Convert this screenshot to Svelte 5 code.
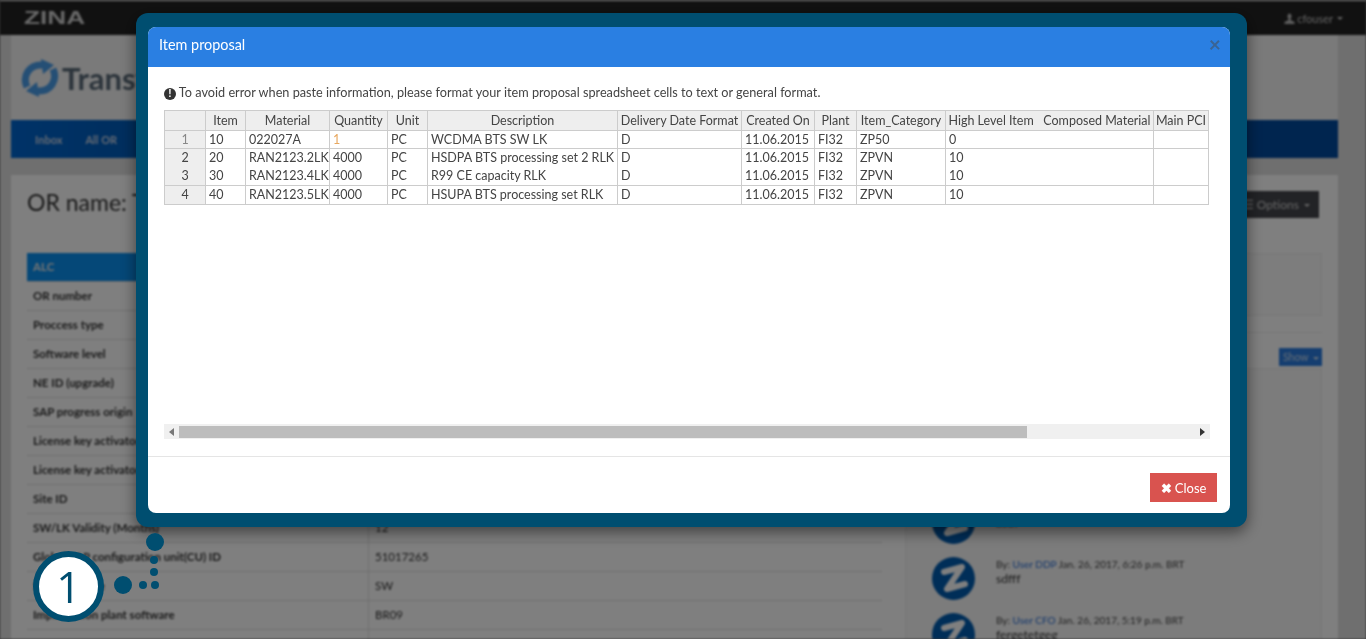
<script>
  const rows = [
    ['ALC', ''],
    ['OR number', ''],
    ['Proccess type', ''],
    ['Software level', ''],
    ['NE ID (upgrade)', ''],
    ['SAP progress origin', ''],
    ['License key activator', ''],
    ['License key activator', ''],
    ['Site ID', ''],
    ['SW/LK Validity (Months)', '12'],
    ['Global SAP configuration unit(CU) ID', '51017265'],
    ['Software type', 'SW'],
    ['Implantation plant software', 'BR09'],
    ['', '']
  ];

  const comments = [
    { user: 'User ADM', date: 'Jan. 26, 2017, 6:30 p.m. BRT', text: 'asdf' },
    { user: 'User DDP', date: 'Jan. 26, 2017, 6:26 p.m. BRT', text: 'sdfff' },
    { user: 'User CFO', date: 'Jan. 26, 2017, 5:19 p.m. BRT', text: 'fergetetgeg' }
  ];

  const headers = ['', 'Item', 'Material', 'Quantity', 'Unit', 'Description', 'Delivery Date Format', 'Created On', 'Plant', 'Item_Category', 'High Level Item\u00a0\u00a0\u00a0Composed Material', 'Main PCI'];
  const widths = [41, 40, 84, 58, 40, 190, 124, 73, 42, 89, 208, 55];

  const items = [
    { n: 1, item: '10', material: '022027A', qty: '1', desc: 'WCDMA BTS SW LK', cat: 'ZP50', high: '0' },
    { n: 2, item: '20', material: 'RAN2123.2LK', qty: '4000', desc: 'HSDPA BTS processing set 2 RLK', cat: 'ZPVN', high: '10' },
    { n: 3, item: '30', material: 'RAN2123.4LK', qty: '4000', desc: 'R99 CE capacity RLK', cat: 'ZPVN', high: '10' },
    { n: 4, item: '40', material: 'RAN2123.5LK', qty: '4000', desc: 'HSUPA BTS processing set RLK', cat: 'ZPVN', high: '10' }
  ];
</script>

<div class="page">
  <header class="topbar">
    <span class="brand">ZINA</span>
    <span class="user">
      <svg width="11" height="11" viewBox="0 0 10 11"><path d="M3 3a2 2.6 0 1 1 4 0q0 2-1 3v1l4 2v2H0V9l4-2V6Q3 5 3 3z" fill="#bbb"/></svg>
      cfouser <i class="caret"></i>
    </span>
  </header>

  <div class="logo">
    <svg width="38" height="40" viewBox="0 0 38 40">
      <path d="M6 29C1 18 8 6 22 7" fill="none" stroke="#4a9eea" stroke-width="7"/>
      <path d="M32 11c5 11-2 23-16 22" fill="none" stroke="#4a9eea" stroke-width="7"/>
      <path d="M20 1l13 6-11 9zM18 39L5 33l11-9z" fill="#4a9eea"/>
    </svg>
    <span>Transformation</span>
  </div>

  <nav class="mainnav">
    <span>Inbox</span>
    <span>All OR</span>
  </nav>

  <section class="card">
    <div class="card-head">
      <h1>OR name: Test</h1>
      <span class="options"><b>☰</b> Options <i class="caret"></i></span>
    </div>
    <div class="columns">
      <div class="details">
        {#each rows as row, i}
          <div class="drow" class:selected={i === 0}>
            <span class="dlabel">{row[0]}</span>
            <span class="dvalue">{row[1]}</span>
          </div>
        {/each}
      </div>
      <aside class="side">
        <div class="side-box"></div>
        <div class="side-head"><span class="show">Show <i class="caret"></i></span></div>
        <div class="comments">
          {#each comments as c}
            <div class="comment">
              <svg class="avatar" width="43" height="43" viewBox="0 0 43 43">
                <circle cx="21.5" cy="21.5" r="21.5" fill="#005cb0"/>
                <path d="M12 15l18-5-15 22 18-5" fill="none" stroke="#fff" stroke-width="6" stroke-linejoin="round" stroke-linecap="round"/>
              </svg>
              <div>
                <div class="meta">By: <span class="who">{c.user}</span> {c.date}</div>
                <div class="ctext">{c.text}</div>
              </div>
            </div>
          {/each}
        </div>
      </aside>
    </div>
  </section>
</div>

<div class="overlay"></div>

<div class="frame">
  <div class="modal">
    <div class="modal-head">
      <span>Item proposal</span>
      <span class="x">×</span>
    </div>
    <div class="modal-body">
      <p class="hint">
        <span class="info">!</span>
        To avoid error when paste information, please format your item proposal spreadsheet cells to text or general format.
      </p>
      <div class="sheet">
        <div class="grid-wrap">
          <table>
            <colgroup>
              {#each widths as w}<col style={`width:${w}px`} />{/each}
            </colgroup>
            <thead>
              <tr>
                {#each headers as h}<th>{h}</th>{/each}
              </tr>
            </thead>
            <tbody>
              {#each items as it}
                <tr class:tight={it.n === 3} class:pre={it.n === 2} class:last={it.n === 4}>
                  <td class="num" class:faint={it.n === 1}>{it.n}</td>
                  <td>{it.item}</td>
                  <td>{it.material}</td>
                  <td class:orange={it.n === 1}>{it.qty}</td>
                  <td>PC</td>
                  <td>{it.desc}</td>
                  <td>D</td>
                  <td>11.06.2015</td>
                  <td>FI32</td>
                  <td>{it.cat}</td>
                  <td>{it.high}</td>
                  <td></td>
                </tr>
              {/each}
            </tbody>
          </table>
        </div>
        <div class="scrollbar">
          <span class="arrow left"></span>
          <div class="track"><div class="thumb"></div></div>
          <span class="arrow right"></span>
        </div>
      </div>
    </div>
    <div class="modal-foot">
      <button type="button" class="close"><b>✖</b> Close</button>
    </div>
  </div>
</div>

<div class="marker">
  <span class="dot big d1"></span>
  <span class="dot d2"></span>
  <span class="dot d3"></span>
  <span class="dot d4"></span>
  <span class="dot d5"></span>
  <span class="dot big d6"></span>
  <span class="badge">1</span>
</div>

<style>
  :global(body) {
    margin: 0;
    height: 639px;
    overflow: hidden;
    background: #6e6e6e;
    font-family: Lato, "Open Sans", sans-serif;
  }

  .page {
    height: 639px;
    overflow: hidden;
    background: #dedede;
    filter: blur(0.9px);
  }

  .topbar {
    height: 35px;
    background: #232323;
    border-top: 1px solid #fff;
    box-sizing: border-box;
    display: flex;
    align-items: center;
    justify-content: space-between;
    padding: 0 23px 0 24px;
  }

  .brand {
    font-family: "Liberation Sans", sans-serif;
    font-weight: 700;
    font-size: 19px;
    color: #d0d0d0;
    transform: scaleX(1.38);
    transform-origin: left;
  }

  .user {
    font-size: 11px;
    color: #c8c8c8;
    display: flex;
    align-items: center;
    gap: 2px;
  }

  .caret {
    display: inline-block;
    border: 3px solid transparent;
    border-top-color: currentColor;
    border-bottom: 0;
    margin-left: 2px;
    vertical-align: middle;
  }

  .logo {
    height: 85px;
    display: flex;
    align-items: center;
    gap: 3px;
    font-size: 31px;
    font-weight: 700;
    color: #5a6a78;
    background: #f4f4f4;
    box-sizing: border-box;
    margin: 0 28px 0 11px;
    padding-left: 10px;
  }

  .mainnav {
    height: 38px;
    margin: 0 28px 0 11px;
    background: linear-gradient(90deg, #0066d0, #005cba 10%, #004a9f 90%);
    display: flex;
    align-items: center;
    gap: 23px;
    padding-left: 24px;
    color: #c8d4e6;
    font-size: 11px;
    font-weight: 700;
  }

  .card {
    margin: 17px 28px 0 11px;
    padding: 0 16px;
    background: #fff;
    height: 470px;
  }

  .card-head {
    height: 78px;
    display: flex;
    justify-content: space-between;
    align-items: flex-start;
  }

  h1 {
    margin: 13px 0 0;
    font-size: 23px;
    font-weight: 400;
    color: #333;
  }

  .options {
    background: #44464c;
    color: #ccc;
    font-size: 12px;
    line-height: 15px;
    padding: 6px 9px 6px 12px;
    margin: 16px 3px 0 0;
  }

  .options b {
    font-weight: 400;
  }

  .columns {
    display: flex;
    gap: 23px;
  }

  .details {
    width: 855px;
    flex: none;
  }

  .drow {
    height: 29px;
    display: flex;
    align-items: center;
    border-bottom: 1px solid #ddd;
    box-sizing: border-box;
    font-size: 11.5px;
    color: #333;
  }

  .drow.selected {
    background: #fff linear-gradient(90deg, #0a90f0, #0a90f0) no-repeat left / 341px 100%;
  }

  .drow.selected .dlabel {
    color: #e8e8e8;
  }

  .dlabel {
    width: 341px;
    padding: 0 0 2px 6px;
    font-weight: 700;
    flex: none;
    box-sizing: border-box;
  }

  .dvalue {
    padding: 0 0 2px 6px;
    border-left: 1px solid #ddd;
    height: 100%;
    box-sizing: border-box;
    display: flex;
    align-items: center;
  }

  .side {
    flex: 1;
    display: flex;
    flex-direction: column;
  }

  .side-box {
    height: 61px;
    border: 1px solid #eee;
    background: #fafafa;
  }

  .side-head {
    margin-top: 16px;
    border-top: 1px solid #eee;
    height: 33px;
    display: flex;
    justify-content: flex-end;
    align-items: flex-end;
  }

  .show {
    background: #2a7ce0;
    color: #cde;
    font-size: 10.5px;
    line-height: 14px;
    padding: 2px 3px 2px 4px;
  }

  .comments {
    border: 1px solid #eee;
    background: #f8f8f8;
    padding: 132px 0 0 26px;
    flex: 1;
    margin-top: 2px;
  }

  .comment {
    display: flex;
    gap: 21px;
    height: 56px;
  }

  .avatar {
    flex: none;
  }

  .meta {
    font-size: 10px;
    color: #444;
    padding-top: 1px;
  }

  .who {
    color: #2a6fd8;
  }

  .ctext {
    font-size: 12.2px;
    line-height: 15px;
    color: #333;
    margin-top: 1px;
  }

  .overlay {
    position: fixed;
    inset: 0;
    background: rgba(0, 0, 0, 0.5);
  }

  .frame {
    position: fixed;
    left: 136px;
    top: 13px;
    width: 1111px;
    height: 514px;
    box-sizing: border-box;
    padding: 14px 17px 14px 12px;
    background: #004e70;
    border-radius: 12px;
    box-shadow: 0 5px 15px rgba(0, 0, 0, 0.5);
  }

  .modal {
    height: 100%;
    background: #fff;
    border-radius: 8px;
    overflow: hidden;
    display: flex;
    flex-direction: column;
  }

  .modal-head {
    height: 40px;
    flex: none;
    box-sizing: border-box;
    background: #2a7fe2;
    color: #fff;
    font-size: 14.4px;
    display: flex;
    align-items: center;
    justify-content: space-between;
    padding: 0 9px 5px 11px;
  }

  .x {
    color: #3a6494;
    font-size: 21px;
    line-height: 20px;
    font-weight: 700;
    margin-top: -2px;
  }

  .modal-body {
    flex: 1;
    padding: 0 16px;
    min-height: 0;
    border-bottom: 1px solid #e5e5e5;
  }

  .hint {
    margin: 16px 0 9px;
    font-size: 12.7px;
    line-height: 18px;
    color: #444;
    white-space: nowrap;
  }

  .info {
    display: inline-block;
    width: 12px;
    height: 12px;
    border-radius: 50%;
    background: #333;
    color: #fff;
    font: 700 10px/12px "Liberation Sans", sans-serif;
    text-align: center;
  }

  .sheet {
    width: 1046px;
    height: 329px;
    display: flex;
    flex-direction: column;
    justify-content: space-between;
  }

  .grid-wrap {
    overflow: hidden;
    padding: 0 0 1px 0;
  }

  table {
    border-collapse: collapse;
    table-layout: fixed;
    font-size: 12.5px;
    color: #444;
    white-space: nowrap;
    width: 1044px;
  }

  th {
    height: 20px;
    padding: 0 0 1px;
    box-sizing: border-box;
    font-weight: 400;
    background: #eee;
    border: 1px solid #ccc;
    overflow: hidden;
  }

  td {
    height: 18px;
    box-sizing: border-box;
    padding: 0 0 1px 3px;
    line-height: 15px;
    border: 1px solid #ccc;
    overflow: hidden;
  }

  tr.pre td {
    border-bottom: 0;
  }

  tr.tight td {
    border-top: 0;
    height: 19px;
  }

  tr.last td {
    height: 19px;
  }

  td.num {
    background: #eee;
    text-align: center;
    padding-left: 0;
  }

  td.faint {
    color: #888;
  }

  td.orange {
    color: #e8a860;
  }

  .scrollbar {
    height: 15px;
    background: #f0f0f0;
    display: flex;
    align-items: center;
    flex: none;
  }

  .track {
    flex: 1;
    height: 12px;
  }

  .thumb {
    width: 848px;
    height: 100%;
    background: #bdbdbd;
  }

  .arrow {
    flex: none;
    width: 0;
    height: 0;
    border-top: 4px solid transparent;
    border-bottom: 4px solid transparent;
    margin: 0 5px;
  }

  .arrow.left {
    border-right: 5px solid #777;
  }

  .arrow.right {
    border-left: 5px solid #333;
  }

  .modal-foot {
    height: 56px;
    flex: none;
    display: flex;
    justify-content: flex-end;
    align-items: flex-start;
    padding: 16px 13px 0 0;
    box-sizing: border-box;
  }

  .close {
    width: 67px;
    height: 29px;
    border: 0;
    padding: 0;
    background: #d9534f;
    color: #fff;
    font: 13px Lato, sans-serif;
  }

  .close b {
    font-size: 13px;
  }

  .marker {
    position: fixed;
    left: 0;
    top: 0;
  }

  .dot {
    position: absolute;
    width: 8px;
    height: 8px;
    border-radius: 50%;
    background: #004e70;
  }

  .dot.big {
    width: 18px;
    height: 18px;
  }

  .d1 { left: 146px; top: 533px; }
  .d2 { left: 150px; top: 556px; }
  .d3 { left: 150px; top: 568px; }
  .d4 { left: 151px; top: 581px; }
  .d5 { left: 139px; top: 581px; }
  .d6 { left: 114px; top: 576px; }

  .badge {
    position: absolute;
    left: 33px;
    top: 551px;
    width: 71px;
    height: 71px;
    box-sizing: border-box;
    border: 6px solid #004e70;
    border-radius: 50%;
    background: #fff;
    color: #004e70;
    font: 400 43px/59px "Open Sans", sans-serif;
    text-align: center;
  }
</style>
